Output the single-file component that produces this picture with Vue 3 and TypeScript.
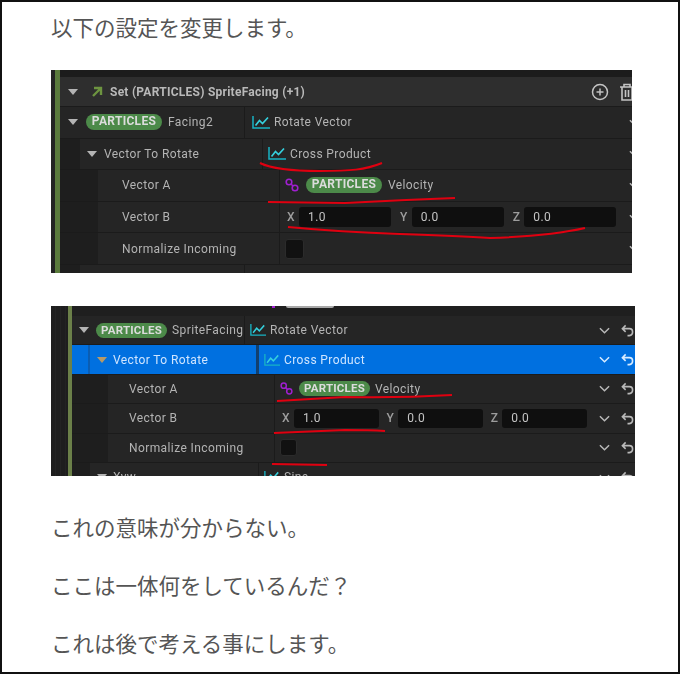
<template>
  <div class="frame">
    <p class="line">以下の設定を変更します。</p>

    <div v-for="shot in shots" :key="shot.id" class="shot" :class="shot.id">
      <div class="shot-inner">
        <div class="gutter"></div>
        <div class="bar"></div>
        <div class="rows">
          <div v-if="shot.id === 'shot-a'" class="strip"></div>
          <div v-if="shot.id === 'shot-a'" class="head">
            <svg class="caret" viewBox="0 0 10 6"><path d="M0 0H10L5 6Z" /></svg>
            <svg class="set-icon" viewBox="0 0 12 12">
              <path d="M3 2H10V9M10 2L2 10" fill="none" stroke="#6d9440" stroke-width="2.4" />
            </svg>
            <span class="head-title">Set (PARTICLES) SpriteFacing (+1)</span>
            <svg class="add-icon" viewBox="0 0 18 18">
              <circle cx="9" cy="9" r="7.5" fill="none" stroke="#c4c4c4" stroke-width="1.5" />
              <path d="M9 5.5V12.5M5.5 9H12.5" stroke="#c4c4c4" stroke-width="1.5" />
            </svg>
            <svg class="trash-icon" viewBox="0 0 16 18">
              <path d="M1 4H15M5 4V1.5H11V4M3 4V17H13V4M6.5 7V14M9.5 7V14" fill="none" stroke="#c4c4c4" stroke-width="1.6" />
            </svg>
          </div>
          <div v-else class="stub">
            <span class="stub-link"></span>
            <span class="stub-pill"></span>
          </div>

          <div v-for="row in shot.rows" :key="row.key" class="row" :class="{ active: row.active }">
            <div class="name" :style="{ width: row.sep + 'px' }">
              <span class="indent" :style="{ width: row.indent + 'px' }"></span>
              <span class="slot" :style="{ width: row.slot + 'px' }">
                <svg v-if="row.caret" class="caret" viewBox="0 0 10 6"><path d="M0 0H10L5 6Z" /></svg>
              </span>
              <span v-if="row.pill" class="pill">PARTICLES</span>
              <span class="label" :class="{ tight: row.pill }">{{ row.name }}</span>
            </div>
            <div class="value" :style="{ paddingLeft: (row.pad ?? 5) + 'px' }">
              <template v-if="row.kind === 'fn'">
                <svg class="fn-icon" viewBox="0 0 18 13" preserveAspectRatio="none">
                  <path d="M1 0V12H18" fill="none" stroke="#17b3c4" stroke-width="1.5" />
                  <path d="M3.5 9.5L7.5 4.5L10.5 7.5L16 1.5" fill="none" stroke="#35d0dd" stroke-width="1.7" />
                </svg>
                <span class="label">{{ row.text }}</span>
              </template>
              <template v-else-if="row.kind === 'link'">
                <svg class="link-icon" viewBox="0 0 14 14">
                  <circle cx="4" cy="4" r="2.8" fill="none" stroke="#a01fd0" stroke-width="1.6" />
                  <circle cx="10" cy="10" r="2.8" fill="none" stroke="#a01fd0" stroke-width="1.6" />
                  <path d="M6 6L8 8" stroke="#a01fd0" stroke-width="1.6" />
                </svg>
                <span class="pill">PARTICLES</span>
                <span class="label tight">{{ row.text }}</span>
              </template>
              <template v-else-if="row.kind === 'vec'">
                <template v-for="axis in row.axes" :key="axis.name">
                  <span class="axis">{{ axis.name }}</span>
                  <span class="field">{{ axis.val }}</span>
                </template>
              </template>
              <span v-else-if="row.kind === 'check'" class="check"></span>

              <span class="tail">
                <svg class="chev" viewBox="0 0 12 7">
                  <path d="M1 1L6 6L11 1" fill="none" stroke="currentColor" stroke-width="1.6" />
                </svg>
                <svg class="undo" viewBox="0 0 14 13">
                  <path d="M5 1L1.5 4.5L5 8M2 4.5H9Q12.5 4.5 12.5 8T9 12H7" fill="none" stroke="currentColor" stroke-width="1.7" />
                </svg>
              </span>
            </div>
          </div>
        </div>
      </div>

      <svg class="ink" :viewBox="shot.box">
        <path v-for="(d, i) in shot.ink" :key="i" :d="d" />
      </svg>
    </div>

    <p class="line after">これの意味が分からない。</p>
    <p class="line">ここは一体何をしているんだ？</p>
    <p class="line">これは後で考える事にします。</p>
  </div>
</template>

<script setup lang="ts">
interface Axis {
  name: string
  val: string
}

interface Row {
  key: string
  name: string
  sep: number
  indent: number
  slot: number
  pad?: number
  caret?: boolean
  pill?: boolean
  active?: boolean
  kind?: 'fn' | 'link' | 'vec' | 'check'
  text?: string
  axes?: Axis[]
}

const axes: Axis[] = [
  { name: 'X', val: '1.0' },
  { name: 'Y', val: '0.0' },
  { name: 'Z', val: '0.0' }
]

const shots: { id: string; box: string; ink: string[]; rows: Row[] }[] = [
  {
    id: 'shot-a',
    box: '51 70 581 203',
    ink: [
      'M260 163C270 168 290 171 320 171S365 170 382 163',
      'M268 202L345 203Q400 200 455 198',
      'M288 227Q340 232 400 234T490 238Q550 236 585 228'
    ],
    rows: [
      { key: 'a1', name: 'Facing2', sep: 185, indent: 0, slot: 26, pad: 7, caret: true, pill: true, kind: 'fn', text: 'Rotate Vector' },
      { key: 'a2', name: 'Vector To Rotate', sep: 203, indent: 20, slot: 24, caret: true, kind: 'fn', text: 'Cross Product' },
      { key: 'a3', name: 'Vector A', sep: 220, indent: 38, slot: 24, kind: 'link', text: 'Velocity' },
      { key: 'a4', name: 'Vector B', sep: 220, indent: 38, slot: 24, kind: 'vec', axes },
      { key: 'a5', name: 'Normalize Incoming', sep: 220, indent: 38, slot: 24, kind: 'check' },
      { key: 'a6', name: '', sep: 185, indent: 20, slot: 24 }
    ]
  },
  {
    id: 'shot-b',
    box: '51 306 584 170',
    ink: [
      'M277 401L345 397Q400 398 452 395',
      'M274 433L345 430Q370 430 385 431',
      'M272 464L327 465'
    ],
    rows: [
      { key: 'b1', name: 'SpriteFacing', sep: 173, indent: 0, slot: 24, caret: true, pill: true, kind: 'fn', text: 'Rotate Vector' },
      { key: 'b2', name: 'Vector To Rotate', sep: 187, indent: 18, slot: 23, caret: true, active: true, kind: 'fn', text: 'Cross Product' },
      { key: 'b3', name: 'Vector A', sep: 203, indent: 36, slot: 21, kind: 'link', text: 'Velocity' },
      { key: 'b4', name: 'Vector B', sep: 203, indent: 36, slot: 21, kind: 'vec', axes },
      { key: 'b5', name: 'Normalize Incoming', sep: 203, indent: 36, slot: 21, kind: 'check' },
      { key: 'b6', name: 'Xyw', sep: 187, indent: 18, slot: 23, caret: true, kind: 'fn', text: 'Sine' }
    ]
  }
]
</script>

<style>
html,
body {
  margin: 0;
  background: #fff;
}
</style>

<style scoped>
.frame {
  box-sizing: border-box;
  width: 680px;
  height: 674px;
  border: 2px solid #111;
  padding: 10px 0 0 49px;
  overflow: hidden;
  background: #fff;
}

.line {
  margin: 0 0 24px;
  height: 34px;
  font: 400 21.5px/30px "Noto Sans CJK JP", sans-serif;
  color: #555;
}

.line.after {
  margin-top: 36px;
}

.shot {
  position: relative;
  overflow: hidden;
  background: #222;
  font-family: Roboto, "Liberation Sans", sans-serif;
  font-size: 12px;
  letter-spacing: 0.4px;
  color: #b4b4b4;
}

.shot-a {
  width: 581px;
  height: 203px;
  margin-bottom: 33px;
}

.shot-b {
  width: 584px;
  height: 170px;
}

.shot-inner {
  display: flex;
  height: 100%;
  filter: blur(0.55px);
}

.gutter {
  flex: none;
  background: #232323;
}

.shot-a .gutter {
  width: 4px;
}

.shot-b .gutter {
  width: 17px;
  background: repeating-linear-gradient(90deg, #1e1e1e 0 4px, #232323 4px 5px);
}

.bar {
  flex: none;
  background: #5a7a3c;
}

.shot-a .bar {
  width: 5px;
}

.shot-b .bar {
  width: 4px;
  background: #6b8049;
}

.rows {
  flex: none;
}

.shot-a .rows {
  width: 585px;
}

.shot-b .rows {
  width: 563px;
}

.strip {
  height: 7px;
  background: #1c1c1c;
}

.head {
  display: flex;
  align-items: center;
  height: 30px;
  padding-left: 8px;
  background: #2e2e2e;
  font-weight: 700;
  letter-spacing: 0.25px;
  border-bottom: 1px solid #1b1b1b;
  box-sizing: border-box;
}

.head .caret {
  margin-right: 13px;
}

.set-icon {
  width: 12px;
  height: 12px;
  margin-right: 7px;
}

.head-title {
  color: #b9b9b9;
  flex: 1;
}

.add-icon {
  width: 18px;
  height: 18px;
  margin-right: 10px;
}

.trash-icon {
  width: 16px;
  height: 18px;
  margin-right: 10px;
}

.stub {
  height: 10px;
  display: flex;
  align-items: flex-start;
  padding-left: 200px;
  background: #1f1f1f;
}

.stub-link {
  width: 3px;
  height: 2px;
  margin-right: 11px;
  background: #a01fd0;
}

.stub-pill {
  width: 48px;
  height: 2px;
  background: #a8a8a8;
  border-radius: 0 0 6px 6px;
}

.row {
  display: flex;
  box-sizing: border-box;
  border-bottom: 1px solid #1b1b1b;
  background: #252525;
}

.shot-a .row {
  height: 31.6px;
}

.shot-b .row {
  height: 29.4px;
}

.name {
  flex: none;
  display: flex;
  align-items: center;
  box-sizing: border-box;
  border-right: 1px solid #1b1b1b;
  white-space: nowrap;
}

.indent {
  flex: none;
  align-self: stretch;
  box-sizing: border-box;
  background: #1e1e1e;
}

.slot {
  flex: none;
  display: flex;
  justify-content: center;
}

.caret {
  width: 10px;
  height: 6px;
  flex: none;
}

.caret path {
  fill: #b4b4b4;
}

.pill {
  flex: none;
  box-sizing: border-box;
  width: 76px;
  height: 16px;
  line-height: 15px;
  text-align: center;
  border-radius: 8px;
  background: #4c8a49;
  color: #dcdcdc;
  font-size: 12px;
  font-weight: 700;
  letter-spacing: 0.3px;
}

.shot-b .pill {
  width: 71px;
  height: 15px;
  line-height: 14px;
  font-size: 11.5px;
  letter-spacing: 0.2px;
}

.label.tight {
  margin-left: 6px;
}

.shot-b .label.tight {
  margin-left: 5px;
}

.value {
  flex: 1;
  display: flex;
  align-items: center;
  min-width: 0;
}

.fn-icon {
  width: 18px;
  height: 13px;
  margin-right: 4px;
  flex: none;
}

.shot-b .fn-icon {
  width: 16px;
  height: 12px;
}

.link-icon {
  width: 14px;
  height: 14px;
  margin-right: 7px;
  flex: none;
}

.shot-b .link-icon {
  width: 13px;
  height: 13px;
  margin-right: 6px;
}

.axis {
  margin: 0 4px 0 2px;
  font-weight: 500;
  color: #9d9d9d;
}

.field {
  flex: none;
  box-sizing: border-box;
  width: 92px;
  height: 20px;
  margin-right: 7px;
  padding-left: 9px;
  line-height: 20px;
  background: #0f0f0f;
  border-radius: 3px;
  color: #c4c4c4;
}

.shot-b .field {
  width: 85px;
  height: 19px;
  line-height: 19px;
  margin-right: 5.5px;
}

.check {
  width: 19px;
  height: 20px;
  background: #111;
  border: 1px solid #2b2b2b;
  box-sizing: border-box;
  border-radius: 3px;
}

.shot-b .check {
  width: 17px;
  height: 17px;
}

.tail {
  margin-left: auto;
  display: flex;
  align-items: center;
  gap: 11px;
  padding-right: 1px;
  color: #b9b9b9;
}

.chev {
  width: 11px;
  height: 7px;
  flex: none;
}

.undo {
  width: 13px;
  height: 13px;
  flex: none;
}

.shot-a .undo {
  display: none;
}

.shot-a .tail {
  margin-right: 4px;
}

.row.active,
.row.active .indent {
  background: #0070e0;
  color: #cfe5ff;
}

.row.active .indent {
  border-right: 2px solid #0a5db3;
}

.row.active .name {
  border-right: 3px solid #12406f;
}

.row.active .caret path {
  fill: #b79a67;
}

.row.active .tail {
  color: #d8ecff;
}

.ink {
  position: absolute;
  inset: 0;
  width: 100%;
  height: 100%;
  fill: none;
  stroke: #e00010;
  stroke-width: 2;
  pointer-events: none;
}
</style>
